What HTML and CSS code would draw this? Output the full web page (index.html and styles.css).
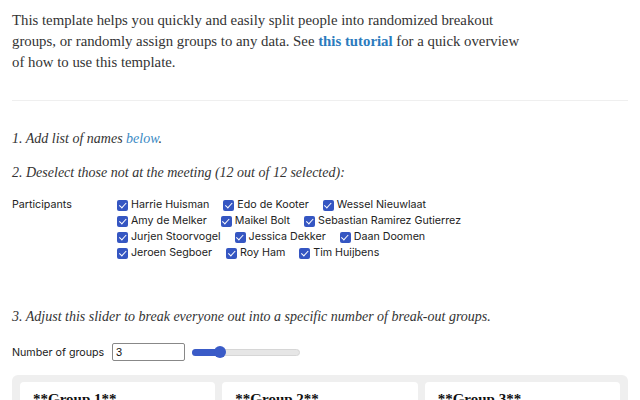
FILE: index.html
```html
<!DOCTYPE html>
<html>
<head>
<meta charset="utf-8">
<link rel="stylesheet" href="styles.css">
</head>
<body>
<p class="intro">This template helps you quickly and easily split people into randomized breakout groups, or randomly assign groups to any data. See <a class="strong-link" href="#">this tutorial</a> for a quick overview of how to use this template.</p>
<hr class="sep">
<p class="step step1">1. Add list of names <a class="em-link" href="#">below</a>.</p>
<p class="step step2">2. Deselect those not at the meeting (12 out of 12 selected):</p>
<div class="field participants">
  <div class="field-label">Participants</div>
  <div class="options">
    <span class="opt"><span class="cb"></span>Harrie Huisman</span>
    <span class="opt"><span class="cb"></span>Edo de Kooter</span>
    <span class="opt"><span class="cb"></span>Wessel Nieuwlaat</span>
    <span class="opt"><span class="cb"></span>Amy de Melker</span>
    <span class="opt"><span class="cb"></span>Maikel Bolt</span>
    <span class="opt"><span class="cb"></span>Sebastian Ramirez Gutierrez</span>
    <span class="opt"><span class="cb"></span>Jurjen Stoorvogel</span>
    <span class="opt"><span class="cb"></span>Jessica Dekker</span>
    <span class="opt"><span class="cb"></span>Daan Doomen</span>
    <span class="opt"><span class="cb"></span>Jeroen Segboer</span>
    <span class="opt"><span class="cb"></span>Roy Ham</span>
    <span class="opt"><span class="cb"></span>Tim Huijbens</span>
  </div>
</div>
<p class="step step3">3. Adjust this slider to break everyone out into a specific number of break-out groups.</p>
<div class="field groups-field">
  <div class="field-label num-label">Number of groups</div>
  <div class="num-input">3</div>
  <div class="slider"><div class="slider-fill"></div><div class="slider-thumb"></div></div>
</div>
<div class="groups">
  <div class="card"><div class="card-title">**Group 1**</div></div>
  <div class="card"><div class="card-title">**Group 2**</div></div>
  <div class="card"><div class="card-title">**Group 3**</div></div>
</div>
</body>
</html>
```
FILE: styles.css
```css
html, body { margin: 0; padding: 0; background: #fff; }
html { overflow: hidden; height: 400px; }
body {
  padding: 0 12px;
  font-family: "Liberation Serif", "DejaVu Serif", serif;
  color: #333;
}
.intro {
  margin: 0;
  padding-top: 10px;
  font-size: 14.8px;
  line-height: 21px;
  width: 522px;
}
.strong-link { color: #2b7bbd; font-weight: bold; text-decoration: none; }
.sep { border: 0; border-top: 1px solid #efefef; margin: 27px 0 0 0; height: 0; }
.step { margin: 0; font-style: italic; font-size: 14px; line-height: 21px; }
.step1 { margin-top: 27px; }
.step2 { margin-top: 13px; }
.em-link { color: #3a8ac4; text-decoration: none; }
.field {
  display: flex;
  font-family: Inter, "Liberation Sans", sans-serif;
  font-size: 10.7px;
  color: #222;
}
.participants { margin-top: 14px; line-height: 16px; }
.field-label { width: 105px; flex: none; }
.options { display: flex; flex-wrap: wrap; width: 400px; }
.opt { display: inline-flex; align-items: center; margin-right: 14px; height: 16px; }
.cb {
  width: 11px; height: 11px;
  background: #3556c2;
  border-radius: 2px;
  margin-right: 3px;
  position: relative;
}
.cb::after {
  content: "";
  position: absolute;
  left: 3.5px; top: 1.2px;
  width: 2.5px; height: 5.5px;
  border: solid #fff;
  border-width: 0 1.6px 1.6px 0;
  transform: rotate(42deg);
}
.step3 { margin-top: 45px; }
.groups-field { margin-top: 16px; align-items: center; height: 18px; }
.num-label { width: 100px; }
.num-input {
  width: 68px; height: 16px;
  border: 1px solid #888;
  border-radius: 2px;
  padding-left: 3px;
  line-height: 16px;
  font-size: 11px;
  color: #111;
  font-family: "Liberation Sans", Arial, sans-serif;
}
.slider {
  margin-left: 7px;
  width: 106px; height: 5px;
  background: #e6e6e6;
  border: 1px solid #d6d6d6;
  border-radius: 4px;
  position: relative;
}
.slider-fill {
  position: absolute; left: -1px; top: -1px;
  width: 28px; height: 7px;
  background: #3a5bc7;
  border-radius: 4px;
}
.slider-thumb {
  position: absolute; left: 21px; top: -4px;
  width: 12px; height: 12px;
  border-radius: 50%;
  background: #3a5bc7;
}
.groups {
  margin-top: 14px;
  background: #efefef;
  border-radius: 6px;
  padding: 7px 8px;
  display: flex;
  gap: 7px;
  height: 60px;
}
.card {
  flex: 1;
  background: #fff;
  border-radius: 4px;
  padding: 9px 13px;
}
.card-title { font-weight: bold; font-size: 15px; line-height: 17px; color: #111; }
```
